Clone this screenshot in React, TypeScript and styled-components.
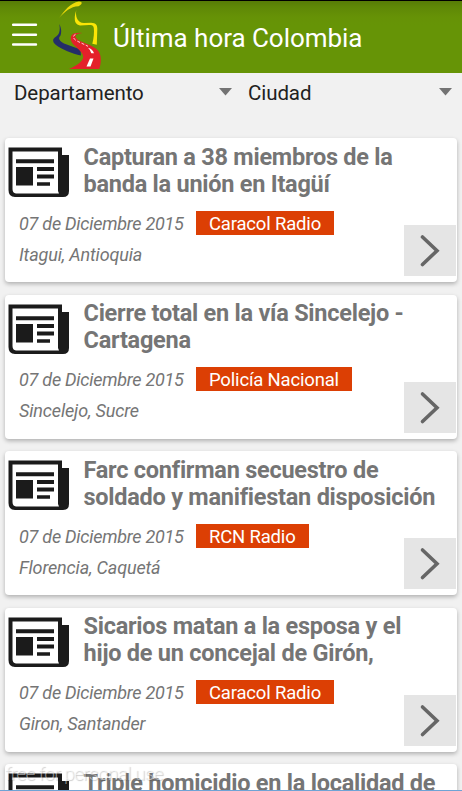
import React from 'react';
import styled, { createGlobalStyle } from 'styled-components';

const GlobalStyle = createGlobalStyle`
  * { box-sizing: border-box; }
  body { margin: 0; background: #f1f1f1; font-family: Roboto, sans-serif; overflow: hidden; }
`;

const Screen = styled.div`
  position: relative;
  width: 462px;
  height: 791px;
  overflow: hidden;
  background: #f1f1f1;
`;

const AppBar = styled.header`
  display: flex;
  align-items: flex-start;
  height: 73px;
  border-top: 1px solid #000;
  background: linear-gradient(#577c06 0, #5f8806 6px, #669206 16px, #669406 24px);
`;

const MenuIcon = styled.svg`
  width: 26px;
  height: 24px;
  margin: 22px 0 0 12px;
`;

const Logo = styled.svg`
  width: 50px;
  height: 72px;
  margin-left: 14px;
`;

const AppTitle = styled.h1`
  margin: 21px 0 0 11px;
  color: #fff;
  font-size: 26px;
  line-height: 32px;
  font-weight: 400;
  letter-spacing: -0.04px;
  white-space: nowrap;
`;

const Filters = styled.div`
  display: grid;
  grid-template-columns: 234px 220px;
  height: 65px;
  padding-left: 14px;
`;

const Filter = styled.div`
  display: flex;
  justify-content: space-between;
  align-items: flex-start;
  padding-right: 16px;
  color: #212121;
  font-size: 20.5px;
  line-height: 24px;
  letter-spacing: -0.08px;
  padding-top: 8px;
`;

const Caret = styled.svg`
  width: 13px;
  height: 8px;
  margin-top: 7px;
`;

const FeedList = styled.main`
  display: flex;
  flex-direction: column;
  gap: 12.5px;
  padding: 0 5px;
`;

const Card = styled.article`
  position: relative;
  flex: none;
  height: 144px;
  border-radius: 4px;
  background: #fff;
  box-shadow: 0 2px 4px rgba(0, 0, 0, 0.27);
`;

const CardTop = styled.div`
  display: flex;
  height: 71.8px;
`;

const NewsIcon = styled.svg`
  flex: none;
  width: 61px;
  height: 51px;
  margin: 9px 0 0 3px;
`;

const Headline = styled.h2`
  margin: 5.8px 0 0 14.5px;
  color: #757575;
  font-size: 23.5px;
  line-height: 27px;
  font-weight: 700;
  letter-spacing: -0.25px;
  white-space: pre-line;
`;

const Meta = styled.div`
  display: flex;
  height: 27px;
  padding-left: 14px;
`;

const Detail = styled.span`
  width: 177px;
  color: #757575;
  font-size: 18px;
  font-style: italic;
  line-height: 27px;
  letter-spacing: -0.25px;
  white-space: nowrap;
`;

const Place = styled(Detail)`
  display: block;
  margin: 4px 0 0 14px;
  letter-spacing: -0.15px;
`;

const Source = styled.span`
  height: 24px;
  margin-top: 1px;
  padding: 0 13px;
  background: #dc3f04;
  color: #fff;
  font-size: 18.5px;
  line-height: 26px;
  letter-spacing: -0.18px;
  white-space: nowrap;
`;

const OpenButton = styled.button`
  position: absolute;
  right: 1.5px;
  bottom: 6px;
  width: 51.5px;
  height: 51px;
  padding: 0;
  border: 0;
  background: #e5e5e5;
`;

const Chevron = styled.svg`
  display: block;
  width: 51px;
  height: 51px;
`;

const Watermark = styled.div`
  position: absolute;
  left: 5px;
  top: 762px;
  color: rgba(255, 255, 255, 0.5);
  font-size: 19px;
  line-height: 24px;
  font-weight: 300;
  letter-spacing: -0.65px;
  text-shadow: 1px 1px 1px rgba(0, 0, 0, 0.2);
  white-space: nowrap;
`;

const BottomLine = styled.div`
  position: absolute;
  left: 0;
  right: 0;
  bottom: 0;
  height: 1px;
  background: #6fa3d5;
`;

const news = [
  { title: 'Capturan a 38 miembros de la\nbanda la unión en Itagüí', place: 'Itagui, Antioquia', source: 'Caracol Radio' },
  { title: 'Cierre total en la vía Sincelejo -\nCartagena', place: 'Sincelejo, Sucre', source: 'Policía Nacional' },
  { title: 'Farc confirman secuestro de\nsoldado y manifiestan disposición', place: 'Florencia, Caquetá', source: 'RCN Radio' },
  { title: 'Sicarios matan a la esposa y el\nhijo de un concejal de Girón,', place: 'Giron, Santander', source: 'Caracol Radio' },
  { title: 'Triple homicidio en la localidad de', place: '', source: '' },
];

function Newspaper() {
  return (
    <NewsIcon viewBox="0 0 61 51">
      <path d="M0.5 0.5H54V8H61V44Q61 50 55 50H7Q0.5 50 0.5 43Z" fill="#1b1b1b" />
      <path d="M4.5 4.5H50V44L51 46.5H8Q4.5 46 4.5 42Z" fill="#fff" />
      <path d="M8 12.3H46V16.3H8ZM8 20H25V38.5H8ZM29 20H46V24H29ZM29 27.5H46V31.5H29ZM29 35.3H42V38.8H29Z" fill="#1b1b1b" />
    </NewsIcon>
  );
}

function DropdownCaret() {
  return <Caret viewBox="0 0 13 8"><path d="M0 0H13L6.5 7.5Z" fill="#737373" /></Caret>;
}

export default function App() {
  return (
    <>
      <GlobalStyle />
      <Screen>
        <AppBar>
          <MenuIcon viewBox="0 0 26 24">
            <path d="M1 1.8H24M1 11.8H24M1 21.5H24" stroke="#fff" strokeWidth="2.4" strokeLinecap="round" />
          </MenuIcon>
          <Logo viewBox="52 1 50 72">
            <path d="M59.2 17.8C64.5 10.5 70 3 79 1.4C83 1.5 82.3 4.5 78.5 6.2C70.5 6.5 65 11.5 59.2 17.8Z" fill="#edda08" />
            <path d="M76.3 10C75.6 14 76 19 80 22Q81.5 23 84 23L91 22.7C96 22.8 97.4 25 97.3 29L96.8 44.8L92.3 43.8C93.8 38 94.3 32 93.8 28C93.5 25.5 92 25 89 25L80 25.4C76 24.5 74.8 22 74.8 19C74.6 16 75.4 13 76.3 10Z" fill="#fbe506" />
            <path d="M59.3 24C61.8 29 61.4 32.5 60.5 35.5C57.5 38.5 59.5 41 64 43.5L80.5 49.5L81 55.6C72 53.4 62 49.5 56 45C51.5 41.5 52.8 38.2 56.5 36.2C60 34 60.2 29 59.3 24Z" fill="#242e68" />
            <path d="M82.5 33C77 33.5 74.5 35.2 76 37.8C79 42.5 93 44.5 98.2 50.8C102 56 101 64 99.3 69H69C77 65.5 83.5 61 83.2 56.5C83 52 76 47.5 73 44C69.5 39.5 70 34.5 75 33.3Q78.5 32.5 82.5 33Z" fill="#e4202a" />
            <path d="M75.5 34.3C72.2 36 73 39 77 41L88 46.3" stroke="#fff" strokeWidth="0.8" strokeDasharray="3 1.7" fill="none" />
            <path d="M88 47.8Q92.5 49 94 53.3L91.3 53.3Q90.5 50 88 47.8ZM90 58.5H93.5L90.5 66.5H86.5Z" fill="#fff" />
          </Logo>
          <AppTitle>Última hora Colombia</AppTitle>
        </AppBar>
        <Filters>
          <Filter>Departamento<DropdownCaret /></Filter>
          <Filter>Ciudad<DropdownCaret /></Filter>
        </Filters>
        <FeedList>
          {news.map((item) => (
            <Card key={item.title}>
              <CardTop>
                <Newspaper />
                <Headline>{item.title}</Headline>
              </CardTop>
              {item.source && (
                <>
                  <Meta>
                    <Detail>07 de Diciembre 2015</Detail>
                    <Source>{item.source}</Source>
                  </Meta>
                  <Place>{item.place}</Place>
                  <OpenButton aria-label="Abrir">
                    <Chevron viewBox="0 0 51 51">
                      <path d="M18.5 12L33 25.7L18.5 39.5" stroke="#666" strokeWidth="3.6" strokeLinecap="round" fill="none" />
                    </Chevron>
                  </OpenButton>
                </>
              )}
            </Card>
          ))}
        </FeedList>
        <Watermark>free for personal use</Watermark>
        <BottomLine />
      </Screen>
    </>
  );
}
